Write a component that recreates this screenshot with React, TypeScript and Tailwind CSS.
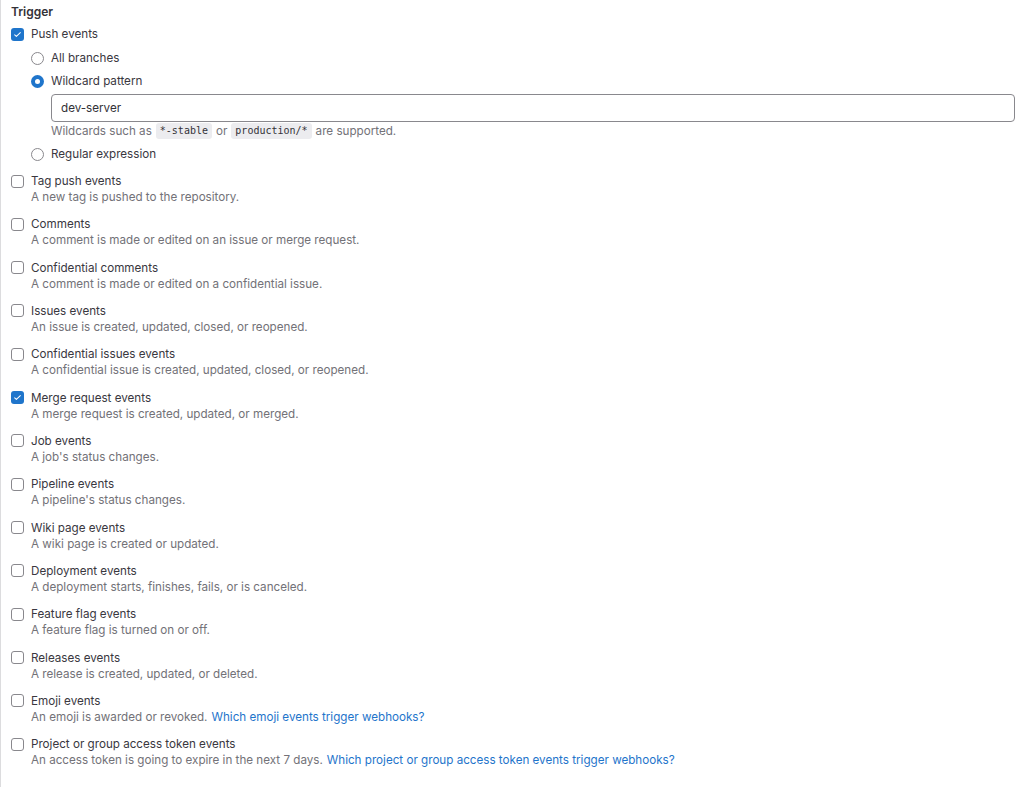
import React from "react";

type Trig = { label: string; desc: string; checked?: boolean; link?: string };

const triggers: Trig[] = [
  { label: "Tag push events", desc: "A new tag is pushed to the repository." },
  { label: "Comments", desc: "A comment is made or edited on an issue or merge request." },
  { label: "Confidential comments", desc: "A comment is made or edited on a confidential issue." },
  { label: "Issues events", desc: "An issue is created, updated, closed, or reopened." },
  { label: "Confidential issues events", desc: "A confidential issue is created, updated, closed, or reopened." },
  { label: "Merge request events", desc: "A merge request is created, updated, or merged.", checked: true },
  { label: "Job events", desc: "A job's status changes." },
  { label: "Pipeline events", desc: "A pipeline's status changes." },
  { label: "Wiki page events", desc: "A wiki page is created or updated." },
  { label: "Deployment events", desc: "A deployment starts, finishes, fails, or is canceled." },
  { label: "Feature flag events", desc: "A feature flag is turned on or off." },
  { label: "Releases events", desc: "A release is created, updated, or deleted." },
  { label: "Emoji events", desc: "An emoji is awarded or revoked.", link: "Which emoji events trigger webhooks?" },
  {
    label: "Project or group access token events",
    desc: "An access token is going to expire in the next 7 days.",
    link: "Which project or group access token events trigger webhooks?",
  },
];

const mono = { fontFamily: "'DejaVu Sans Mono', 'Liberation Mono', monospace" };

function Checkbox({ checked }: { checked?: boolean }) {
  return checked ? (
    <span className="w-[13px] h-[13px] rounded-[3px] bg-[#1f75cb] flex items-center justify-center shrink-0">
      <svg width="9" height="9" viewBox="0 0 16 16" fill="none">
        <path d="M3 8.5l3 3 7-7" stroke="white" strokeWidth="1.8" strokeLinecap="round" strokeLinejoin="round" />
      </svg>
    </span>
  ) : (
    <span className="w-[13px] h-[13px] rounded-[3px] border border-[#89888d] bg-white shrink-0" />
  );
}

function Radio({ checked }: { checked?: boolean }) {
  return checked ? (
    <span className="w-[13px] h-[13px] rounded-full bg-[#1f75cb] flex items-center justify-center shrink-0">
      <span className="w-[5px] h-[5px] rounded-full bg-white" />
    </span>
  ) : (
    <span className="w-[13px] h-[13px] rounded-full border border-[#89888d] bg-white shrink-0" />
  );
}

export default function App() {
  return (
    <div
      className="min-h-[787px] bg-white border-l border-[#dcdcde] text-[11.65px] leading-[16px] text-[#3a383f] pl-[10px] pr-[9px] pt-[4px]"
      style={{ fontFamily: "Inter, 'Noto Sans', sans-serif" }}
    >
      <div className="font-semibold text-[12px] text-[#333238]">Trigger</div>

      <div className="mt-[6px] flex items-center gap-[7px]">
        <Checkbox checked />
        <span>Push events</span>
      </div>

      <div className="pl-[20px]">
        <div className="mt-[8px] flex items-center gap-[7px]">
          <Radio />
          <span>All branches</span>
        </div>
        <div className="mt-[7px] flex items-center gap-[7px]">
          <Radio checked />
          <span>Wildcard pattern</span>
        </div>
        <div className="pl-[20px]">
          <div className="mt-[5px] h-[28px] border border-[#89888d] rounded-[4px] flex items-center px-[9px] text-[#333238]">
            dev-server
          </div>
          <div className="mt-[1px] text-[#737278] flex items-center">
            Wildcards such as
            <code className="mx-[4px] px-[4px] bg-[#ececef] rounded-[3px] text-[#333238] text-[10px] leading-[16px]" style={mono}>
              *-stable
            </code>
            or
            <code className="mx-[4px] px-[4px] bg-[#ececef] rounded-[3px] text-[#333238] text-[10px] leading-[16px]" style={mono}>
              production/*
            </code>
            are supported.
          </div>
        </div>
        <div className="mt-[7px] flex items-center gap-[7px]">
          <Radio />
          <span>Regular expression</span>
        </div>
      </div>

      <div className="mt-[11px] flex flex-col gap-[11.33px]">
        {triggers.map((t) => (
          <div key={t.label} className="flex gap-[7px]">
            <div className="h-[16px] flex items-center">
              <Checkbox checked={t.checked} />
            </div>
            <div>
              <div>{t.label}</div>
              <div className="text-[#737278]">
                {t.desc}
                {t.link && <a className="text-[#1f75cb] ml-[4px]">{t.link}</a>}
              </div>
            </div>
          </div>
        ))}
      </div>
    </div>
  );
}
